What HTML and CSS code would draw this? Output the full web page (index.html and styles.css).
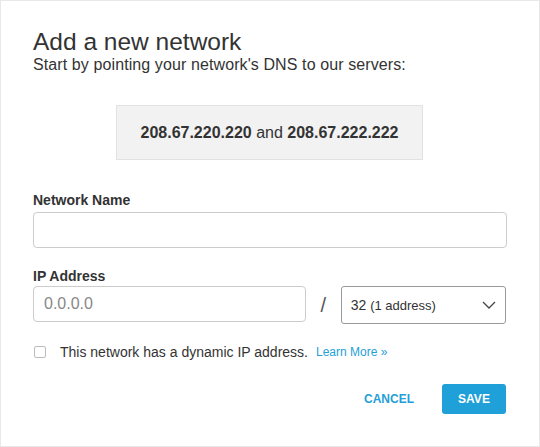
FILE: index.html
```html
<!DOCTYPE html>
<html>
<head>
<meta charset="utf-8">
<link rel="stylesheet" href="styles.css">
</head>
<body>
<div class="dialog">
  <h1 class="title">Add a new network</h1>
  <p class="subtitle">Start by pointing your network's DNS to our servers:</p>
  <div class="dns"><b>208.67.220.220</b> and <b>208.67.222.222</b></div>
  <label class="label">Network Name</label>
  <input class="input full" type="text">
  <label class="label label-ip">IP Address</label>
  <div class="ip-row">
    <input class="input ip" type="text" placeholder="0.0.0.0">
    <span class="slash">/</span>
    <div class="select">
      <span>32 <small>(1 address)</small></span>
      <svg width="14" height="8" viewBox="0 0 14 8"><path d="M1 1 L7 7 L13 1" fill="none" stroke="#444" stroke-width="1.3"/></svg>
    </div>
  </div>
  <div class="check-row">
    <span class="checkbox"></span>
    <span class="check-text">This network has a dynamic IP address.</span>
    <a class="learn">Learn More »</a>
  </div>
  <div class="actions">
    <a class="cancel">CANCEL</a>
    <button class="save">SAVE</button>
  </div>
</div>
</body>
</html>
```
FILE: styles.css
```css
* { box-sizing: border-box; }
html, body { margin: 0; padding: 0; background: #fff; }
body { font-family: "Liberation Sans", Arial, Helvetica, sans-serif; color: #333; }
.dialog {
  width: 540px; height: 447px;
  border: 1px solid #e8e8e8;
  padding: 27px 33px 0 32px;
  display: flex; flex-direction: column;
}
.title { margin: 0; font-size: 24.5px; font-weight: normal; line-height: 28px; color: #333; }
.subtitle { margin: 0; font-size: 16px; line-height: 18px; color: #333; letter-spacing: 0.1px; }
.dns {
  align-self: center;
  width: 307px; height: 55px;
  margin-top: 31px;
  background: #f2f2f2; border: 1px solid #e2e2e2;
  display: flex; align-items: center; justify-content: center;
  font-size: 16px; color: #333; gap: 0;
  white-space: pre;
}
.dns b { font-weight: bold; }
.label { display: block; font-size: 14px; font-weight: bold; line-height: 16px; margin-top: 32px; color: #333; }
.label-ip { margin-top: 20px; }
.input {
  display: block; height: 36px; border: 1px solid #ccc; border-radius: 4px;
  margin-top: 4px; padding: 0 10px; font-family: inherit; font-size: 16px; color: #333;
  background: #fff; outline: none;
}
.full { width: 474px; }
.ip-row { display: flex; align-items: flex-start; margin-top: 2px; }
.ip-row .input { margin-top: 0; }
.ip { width: 274px; }
.input::placeholder { color: #888; }
.slash { width: 35px; text-align: center; font-size: 20px; color: #555; line-height: 38px; }
.select {
  width: 166px; height: 38px; border: 1px solid #999; border-radius: 3px;
  display: flex; align-items: center; justify-content: space-between;
  padding: 0 9px 0 9px; font-size: 14px; color: #333;
}
.select small { font-size: 13px; }
.check-row { display: flex; align-items: center; margin-top: 20px; height: 16px; }
.checkbox { width: 12px; height: 12px; border: 1px solid #bbb; border-radius: 2px; margin-left: 1px; }
.check-text { font-size: 14px; margin-left: 14px; color: #333; }
.learn { font-size: 12px; color: #1fa0d8; margin-left: 8px; }
.actions { display: flex; justify-content: flex-end; align-items: center; margin-top: 24px; gap: 28px; }
.cancel { font-size: 12px; font-weight: bold; color: #1fa0d8; }
.save {
  width: 64px; height: 30px; background: #1fa0d8; color: #fff; border: none; border-radius: 3px;
  font-family: inherit; font-size: 12px; font-weight: bold; padding: 0;
}
```
